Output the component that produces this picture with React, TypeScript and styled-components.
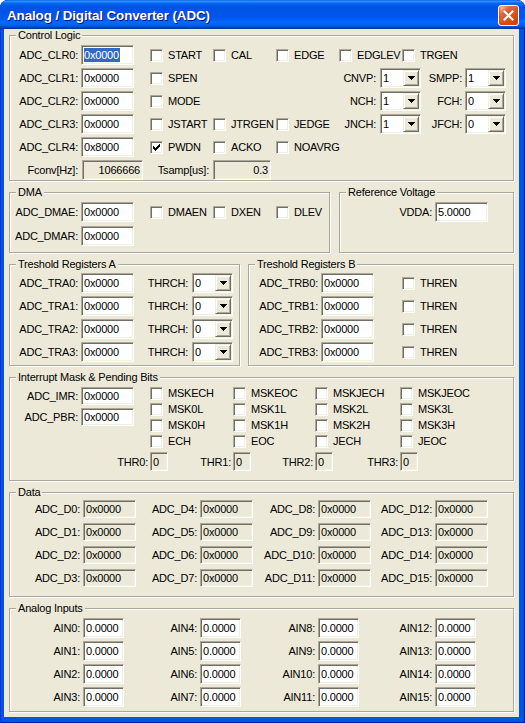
import React from 'react';
import styled, { createGlobalStyle, css } from 'styled-components';

const GlobalStyle = createGlobalStyle`
  * { box-sizing: border-box; }
  html, body { margin: 0; padding: 0; background: #ffffff; }
  body {
    font-family: "Liberation Sans", Arial, Helvetica, sans-serif;
    font-size: 11px;
    color: #000000;
    letter-spacing: -0.2px;
  }
`;

const sunken = css`
  border: 1px solid;
  border-color: #aca899 #ffffff #ffffff #aca899;
  box-shadow: inset 1px 1px 0 #716f64, inset -1px -1px 0 #f1efe2;
`;

const Window = styled.div`
  width: 525px;
  height: 723px;
  display: flex;
  flex-direction: column;
  background: #0054e3;
  border-radius: 8px 8px 0 0;
  box-shadow: inset 1px 0 0 #0831d9, inset -1px 0 0 #001ea0, inset 0 -1px 0 #001ea0;
  overflow: hidden;
`;

const TitleBar = styled.div`
  height: 29px;
  flex: none;
  display: flex;
  align-items: center;
  justify-content: space-between;
  padding: 0 6px 0 7px;
  border-radius: 8px 8px 0 0;
  background: linear-gradient(
    to bottom,
    #0058ee 0%,
    #3593ff 4%,
    #288eff 6%,
    #127dff 8%,
    #036ffc 10%,
    #0262ee 14%,
    #0057e5 20%,
    #0054e3 24%,
    #0055eb 56%,
    #005bf5 66%,
    #026afe 76%,
    #0062ef 86%,
    #0052d6 92%,
    #0040ab 96%,
    #003092 100%
  );
`;

const TitleText = styled.span`
  color: #ffffff;
  font-weight: bold;
  font-size: 13.4px;
  letter-spacing: -0.1px;
  text-shadow: 1px 1px 0 #0f1089;
  padding-top: 1px;
`;

const CloseButton = styled.div`
  width: 21px;
  height: 21px;
  margin-top: 2px;
  border: 1px solid #ffffff;
  border-radius: 3px;
  display: flex;
  align-items: center;
  justify-content: center;
  background: radial-gradient(circle at 90% 90%, #cc4600 0%, #dc5a27 55%, #d86a46 70%, #ffccb2 90%, #ffffff 100%);
  box-shadow: inset 0 -1px 2px 1px #da4600;
`;

const Body = styled.div`
  flex: 1;
  margin: 0 6px 6px 4px;
  background: #ece9d8;
  padding: 6px 5px 5px 5px;
  display: flex;
  flex-direction: column;
  gap: 11px;
`;

const GroupRow = styled.div<{ $gap: number }>`
  display: flex;
  gap: ${(p) => p.$gap}px;
`;

const Group = styled.div<{ $h: number; $w?: number }>`
  position: relative;
  height: ${(p) => p.$h}px;
  ${(p) => (p.$w ? `width: ${p.$w}px; flex: none;` : 'flex: 1;')}
  border: 1px solid #aca899;
  box-shadow: inset 1px 1px 0 #ffffff, 1px 1px 0 #ffffff;
`;

const Caption = styled.span`
  position: absolute;
  top: -7px;
  left: 6px;
  padding: 0 2px;
  line-height: 13px;
  background: #ece9d8;
  white-space: nowrap;
`;

const Stack = styled.div<{ $pt: number; $gap: number; $pl?: number }>`
  display: flex;
  flex-direction: column;
  gap: ${(p) => p.$gap}px;
  padding-top: ${(p) => p.$pt}px;
  padding-left: ${(p) => p.$pl ?? 0}px;
`;

const Row = styled.div<{ $h?: number }>`
  display: flex;
  align-items: center;
  height: ${(p) => p.$h ?? 20}px;
`;

const Label = styled.span<{ $w?: number; $gap?: number }>`
  ${(p) => (p.$w ? `width: ${p.$w}px; flex: none;` : 'flex: 1;')}
  padding-right: ${(p) => p.$gap ?? 3}px;
  text-align: right;
  white-space: nowrap;
`;

const Spacer = styled.span<{ $w: number }>`
  width: ${(p) => p.$w}px;
  flex: none;
`;

const TextBox = styled.div<{ $w: number; $h?: number; $ro?: boolean; $right?: boolean }>`
  ${sunken}
  width: ${(p) => p.$w}px;
  height: ${(p) => p.$h ?? 20}px;
  flex: none;
  display: flex;
  align-items: center;
  justify-content: ${(p) => (p.$right ? 'flex-end' : 'flex-start')};
  padding: 0 2px;
  background: ${(p) => (p.$ro ? '#ece9d8' : '#ffffff')};
  white-space: nowrap;
  overflow: hidden;
`;

const Selected = styled.span`
  background: #316ac5;
  color: #ffffff;
  line-height: 14px;
  padding-right: 1px;
`;

const CheckItem = styled.div<{ $w?: number }>`
  display: flex;
  align-items: center;
  gap: 5px;
  ${(p) => (p.$w ? `width: ${p.$w}px; flex: none;` : 'flex: 1;')}
  white-space: nowrap;
`;

const CheckBox = styled.span`
  ${sunken}
  width: 13px;
  height: 13px;
  flex: none;
  background: #ffffff;
  display: flex;
  align-items: center;
  justify-content: center;
`;

const Combo = styled.div<{ $w: number }>`
  ${sunken}
  width: ${(p) => p.$w}px;
  height: 20px;
  flex: none;
  display: flex;
  padding: 1px;
  background: #ffffff;
`;

const ComboValue = styled.span`
  flex: 1;
  display: flex;
  align-items: center;
  padding-left: 1px;
`;

const ComboButton = styled.span`
  width: 16px;
  flex: none;
  display: flex;
  align-items: center;
  justify-content: center;
  background: #ece9d8;
  border: 1px solid;
  border-color: #f1efe2 #716f64 #716f64 #f1efe2;
  box-shadow: inset 1px 1px 0 #ffffff, inset -1px -1px 0 #aca899;
`;

const IntTop = styled.div`
  display: flex;
`;

const RegCol = styled.div`
  width: 140px;
  flex: none;
  display: flex;
  flex-direction: column;
  gap: 3px;
  padding-top: 2px;
`;

const BitGrid = styled.div`
  flex: 1;
  display: grid;
  grid-template-columns: 83px 82px 85px 1fr;
  grid-auto-rows: 16px;
  align-items: center;
`;

const ThrRow = styled.div`
  display: flex;
  align-items: center;
  height: 19px;
  margin-top: 3px;
`;

const ThrCell = styled.div<{ $w: number }>`
  width: ${(p) => p.$w}px;
  flex: none;
  display: flex;
  align-items: center;
`;

const CellGrid = styled.div<{ $pt: number; $rowH: number; $rowGap: number }>`
  display: grid;
  grid-template-columns: 117px 118px 117px 1fr;
  grid-template-rows: repeat(4, ${(p) => p.$rowH}px);
  grid-auto-flow: column;
  row-gap: ${(p) => p.$rowGap}px;
  padding-top: ${(p) => p.$pt}px;
  padding-left: 10px;
`;

const Cell = styled.div`
  display: flex;
  align-items: center;
`;

const CheckMark = () => (
  <svg width="7" height="7" viewBox="0 0 7 7" shapeRendering="crispEdges">
    {[2, 3, 4, 3, 2, 1, 0].map((top, c) => (
      <rect key={c} x={c} y={top} width="1" height="3" fill="#000" />
    ))}
  </svg>
);

const Arrow = () => (
  <svg width="7" height="4" viewBox="0 0 7 4" shapeRendering="crispEdges">
    <rect x="0" y="0" width="7" height="1" fill="#000" />
    <rect x="1" y="1" width="5" height="1" fill="#000" />
    <rect x="2" y="2" width="3" height="1" fill="#000" />
    <rect x="3" y="3" width="1" height="1" fill="#000" />
  </svg>
);

const CloseGlyph = () => (
  <svg width="11" height="11" viewBox="0 0 11 11">
    <path d="M1.5 1.5 L9.5 9.5 M9.5 1.5 L1.5 9.5" stroke="#fff" strokeWidth="2" strokeLinecap="square" fill="none" />
  </svg>
);

const CheckField = ({ label, w, checked }: { label: string; w?: number; checked?: boolean }) => (
  <CheckItem $w={w}>
    <CheckBox>{checked ? <CheckMark /> : null}</CheckBox>
    <span>{label}</span>
  </CheckItem>
);

const ComboBox = ({ value, w = 41 }: { value: string; w?: number }) => (
  <Combo $w={w}>
    <ComboValue>{value}</ComboValue>
    <ComboButton>
      <Arrow />
    </ComboButton>
  </Combo>
);

const bits = [
  'MSKECH', 'MSKEOC', 'MSKJECH', 'MSKJEOC',
  'MSK0L', 'MSK1L', 'MSK2L', 'MSK3L',
  'MSK0H', 'MSK1H', 'MSK2H', 'MSK3H',
  'ECH', 'EOC', 'JECH', 'JEOC',
];

const thr = [
  { name: 'THR0:', w: 158 },
  { name: 'THR1:', w: 83 },
  { name: 'THR2:', w: 82 },
  { name: 'THR3:', w: 85 },
];

const idx = Array.from({ length: 16 }, (_, i) => i);

export default function App() {
  return (
    <>
      <GlobalStyle />
      <Window>
        <TitleBar>
          <TitleText>Analog / Digital Converter (ADC)</TitleText>
          <CloseButton>
            <CloseGlyph />
          </CloseButton>
        </TitleBar>
        <Body>
          <Group $h={147}>
            <Caption>Control Logic</Caption>
            <Stack $pt={9} $gap={3}>
              <Row>
                <Label $w={71}>ADC_CLR0:</Label>
                <TextBox $w={53}>
                  <Selected>0x0000</Selected>
                </TextBox>
                <Spacer $w={16} />
                <CheckField w={63} label="START" />
                <CheckField w={63} label="CAL" />
                <CheckField w={63} label="EDGE" />
                <CheckField w={63} label="EDGLEV" />
                <CheckField label="TRGEN" />
              </Row>
              <Row>
                <Label $w={71}>ADC_CLR1:</Label>
                <TextBox $w={53}>0x0000</TextBox>
                <Spacer $w={16} />
                <CheckField w={63} label="SPEN" />
                <Spacer $w={126} />
                <Label $w={41} $gap={4}>CNVP:</Label>
                <ComboBox value="1" />
                <Label $w={44} $gap={3}>SMPP:</Label>
                <ComboBox value="1" />
              </Row>
              <Row>
                <Label $w={71}>ADC_CLR2:</Label>
                <TextBox $w={53}>0x0000</TextBox>
                <Spacer $w={16} />
                <CheckField w={63} label="MODE" />
                <Spacer $w={126} />
                <Label $w={41} $gap={4}>NCH:</Label>
                <ComboBox value="1" />
                <Label $w={44} $gap={3}>FCH:</Label>
                <ComboBox value="0" />
              </Row>
              <Row>
                <Label $w={71}>ADC_CLR3:</Label>
                <TextBox $w={53}>0x0000</TextBox>
                <Spacer $w={16} />
                <CheckField w={63} label="JSTART" />
                <CheckField w={63} label="JTRGEN" />
                <CheckField w={63} label="JEDGE" />
                <Label $w={41} $gap={4}>JNCH:</Label>
                <ComboBox value="1" />
                <Label $w={44} $gap={3}>JFCH:</Label>
                <ComboBox value="0" />
              </Row>
              <Row>
                <Label $w={71}>ADC_CLR4:</Label>
                <TextBox $w={53}>0x8000</TextBox>
                <Spacer $w={16} />
                <CheckField w={63} label="PWDN" checked />
                <CheckField w={63} label="ACKO" />
                <CheckField w={63} label="NOAVRG" />
              </Row>
              <Row>
                <Label $w={72} $gap={4}>Fconv[Hz]:</Label>
                <TextBox $w={61} $ro $right>1066666</TextBox>
                <Label $w={70} $gap={4}>Tsamp[us]:</Label>
                <TextBox $w={58} $ro $right>0.3</TextBox>
              </Row>
            </Stack>
          </Group>

          <GroupRow $gap={9}>
            <Group $h={61} $w={321}>
              <Caption>DMA</Caption>
              <Stack $pt={9} $gap={4}>
                <Row>
                  <Label $w={71}>ADC_DMAE:</Label>
                  <TextBox $w={53}>0x0000</TextBox>
                  <Spacer $w={16} />
                  <CheckField w={63} label="DMAEN" />
                  <CheckField w={63} label="DXEN" />
                  <CheckField w={63} label="DLEV" />
                </Row>
                <Row>
                  <Label $w={71}>ADC_DMAR:</Label>
                  <TextBox $w={53}>0x0000</TextBox>
                </Row>
              </Stack>
            </Group>
            <Group $h={61}>
              <Caption>Reference Voltage</Caption>
              <Stack $pt={9} $gap={4}>
                <Row>
                  <Label $w={95}>VDDA:</Label>
                  <TextBox $w={53}>5.0000</TextBox>
                </Row>
              </Stack>
            </Group>
          </GroupRow>

          <GroupRow $gap={8}>
            <Group $h={102} $w={231}>
              <Caption>Treshold Registers A</Caption>
              <Stack $pt={8} $gap={3}>
                {[0, 1, 2, 3].map((i) => (
                  <Row key={i}>
                    <Label $w={71}>{`ADC_TRA${i}:`}</Label>
                    <TextBox $w={53}>0x0000</TextBox>
                    <Label $w={58} $gap={4}>THRCH:</Label>
                    <ComboBox value="0" />
                  </Row>
                ))}
              </Stack>
            </Group>
            <Group $h={102}>
              <Caption>Treshold Registers B</Caption>
              <Stack $pt={8} $gap={3}>
                {[0, 1, 2, 3].map((i) => (
                  <Row key={i}>
                    <Label $w={72}>{`ADC_TRB${i}:`}</Label>
                    <TextBox $w={53}>0x0000</TextBox>
                    <Spacer $w={28} />
                    <CheckField label="THREN" />
                  </Row>
                ))}
              </Stack>
            </Group>
          </GroupRow>

          <Group $h={99}>
            <Caption>Interrupt Mask &amp; Pending Bits</Caption>
            <Stack $pt={7} $gap={0}>
              <IntTop>
                <RegCol>
                  <Row $h={18}>
                    <Label $w={71}>ADC_IMR:</Label>
                    <TextBox $w={53} $h={18}>0x0000</TextBox>
                  </Row>
                  <Row $h={18}>
                    <Label $w={71}>ADC_PBR:</Label>
                    <TextBox $w={53} $h={18}>0x0000</TextBox>
                  </Row>
                </RegCol>
                <BitGrid>
                  {bits.map((b) => (
                    <CheckField key={b} label={b} />
                  ))}
                </BitGrid>
              </IntTop>
              <ThrRow>
                {thr.map((t) => (
                  <ThrCell key={t.name} $w={t.w}>
                    <Label $gap={2}>{t.name}</Label>
                    <TextBox $w={18} $h={19} $ro>0</TextBox>
                  </ThrCell>
                ))}
              </ThrRow>
            </Stack>
          </Group>

          <Group $h={106}>
            <Caption>Data</Caption>
            <CellGrid $pt={7} $rowH={18} $rowGap={5}>
              {idx.map((i) => (
                <Cell key={i}>
                  <Label $w={63}>{`ADC_D${i}:`}</Label>
                  <TextBox $w={53} $h={18} $ro>0x0000</TextBox>
                </Cell>
              ))}
            </CellGrid>
          </Group>

          <Group $h={107}>
            <Caption>Analog Inputs</Caption>
            <CellGrid $pt={9} $rowH={20} $rowGap={3}>
              {idx.map((i) => (
                <Cell key={i}>
                  <Label $w={63}>{`AIN${i}:`}</Label>
                  <TextBox $w={41}>0.0000</TextBox>
                </Cell>
              ))}
            </CellGrid>
          </Group>
        </Body>
      </Window>
    </>
  );
}
